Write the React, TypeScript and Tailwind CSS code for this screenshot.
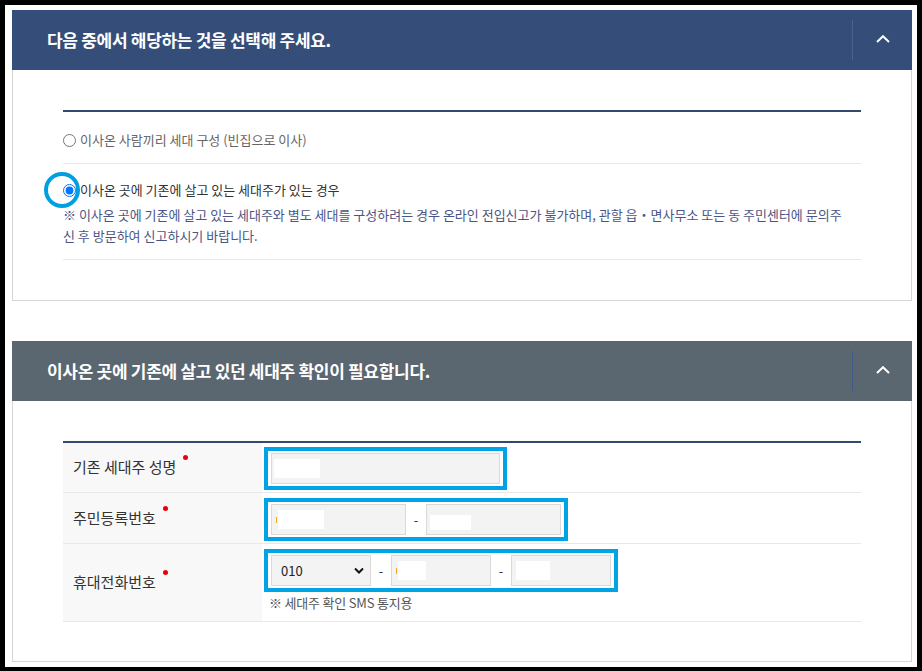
import type React from 'react';

const font = { fontFamily: "'Noto Sans CJK KR', 'Noto Sans', sans-serif" };

const Chevron: React.FC = () => (
  <svg width="14" height="8" viewBox="0 0 14 8" fill="none">
    <path d="M1 7L7 1.2L13 7" stroke="#ffffff" strokeWidth="2" />
  </svg>
);

const PanelHeader: React.FC<{ title: string; bg: string; divider: string }> = ({ title, bg, divider }) => (
  <div className={`flex h-[60px] items-center ${bg}`}>
    <h2 className="flex-1 pl-[35px] text-[17px] font-bold tracking-[-0.3px] text-white">{title}</h2>
    <div className={`h-[40px] w-px ${divider}`} />
    <div className="flex w-[59px] items-center justify-center pb-[2px]">
      <Chevron />
    </div>
  </div>
);

const RequiredDot: React.FC = () => (
  <span className="relative -top-[10px] ml-[7px] inline-block h-[5px] w-[5px] rounded-full bg-[#e8000b]" />
);

// grey input box with a white blot over the typed value
const FakeInput: React.FC<{ w: string; blot: string; blotH?: string; blotMt?: string; ml: string; sliver?: boolean }> = ({
  w,
  blot,
  blotH = 'h-[19px]',
  blotMt = '',
  ml,
  sliver,
}) => (
  <div className={`flex h-[31px] items-center border border-[#d9d9d9] bg-[#f3f3f3] ${w}`}>
    {sliver && <span className="ml-[4px] h-[6px] w-[1px] bg-[#f5a623]" />}
    <span className={`${ml} ${blot} ${blotH} ${blotMt} bg-white`} />
  </div>
);

const Dash: React.FC = () => <span className="w-[20px] text-center text-[13px] text-[#333]">-</span>;

const Annot: React.FC<{ children: React.ReactNode }> = ({ children }) => (
  <div className="ml-[2px] inline-flex items-center border-4 border-[#00a3e4] px-[3px] py-[2px]">{children}</div>
);

export default function App() {
  return (
    <div className="min-h-screen bg-black p-[5px]" style={font}>
      <div className="h-[662px] bg-white pl-[7px] pr-[5px] pt-[5px]">
        {/* choice panel */}
        <section>
          <PanelHeader title="다음 중에서 해당하는 것을 선택해 주세요." bg="bg-[#354e79]" divider="bg-[#4d628a]" />
          <div className="border-x border-b border-[#d6d6d6] px-[50px] py-[40px]">
            <div className="border-t-2 border-[#34496f]">
              <label className="flex items-center border-b border-[#e8e8e8] pb-[14px] pt-[19px]">
                <input type="radio" name="case" className="m-0 h-[13px] w-[13px]" />
                <span className="ml-[4px] text-[13px] leading-[18px] text-[#666]">
                  이사온 사람끼리 세대 구성 (빈집으로 이사)
                </span>
              </label>
              <div className="border-b border-[#e8e8e8] pb-[13px] pt-[17px]">
                <label className="flex items-center">
                  <span className="relative flex h-[13px] w-[13px]">
                    <input type="radio" name="case" defaultChecked className="m-0 h-[13px] w-[13px]" />
                    <span className="absolute -left-[19px] -top-[12px] h-[36px] w-[36px] rounded-full border-4 border-[#009fe0]" />
                  </span>
                  <span className="ml-[4px] text-[13px] leading-[18px] text-[#333]">
                    이사온 곳에 기존에 살고 있는 세대주가 있는 경우
                  </span>
                </label>
                <p className="mt-[5px] whitespace-nowrap text-[13px] leading-[21px] text-[#4b5585]">
                  ※ 이사온 곳에 기존에 살고 있는 세대주와 별도 세대를 구성하려는 경우 온라인 전입신고가 불가하며, 관할 읍・면사무소 또는 동 주민센터에 문의주
                  <br />신 후 방문하여 신고하시기 바랍니다.
                </p>
              </div>
            </div>
          </div>
        </section>

        {/* householder check panel */}
        <section className="mt-[40px]">
          <PanelHeader title="이사온 곳에 기존에 살고 있던 세대주 확인이 필요합니다." bg="bg-[#5a6670]" divider="bg-[#41598a]" />
          <div className="border-x border-b border-[#d6d6d6] px-[50px] pb-[39px] pt-[40px]">
            <div className="border-t-2 border-[#34496f] text-[15px] text-[#333]">
              <div className="flex border-b border-[#e8e8e8]">
                <div className="flex w-[199px] items-center bg-[#f8f8f8] pl-[10px]">
                  기존 세대주 성명<RequiredDot />
                </div>
                <div className="pb-[2px] pt-[4px]">
                  <Annot>
                    <FakeInput w="w-[229px]" blot="w-[46px]" ml="ml-[2px]" />
                  </Annot>
                </div>
              </div>
              <div className="flex border-b border-[#e8e8e8]">
                <div className="flex w-[199px] items-center bg-[#f8f8f8] pl-[10px]">
                  주민등록번호<RequiredDot />
                </div>
                <div className="pb-[2px] pt-[5px]">
                  <Annot>
                    <FakeInput w="w-[135px]" blot="w-[46px]" ml="ml-[1px]" sliver />
                    <Dash />
                    <FakeInput w="w-[135px]" blot="w-[41px]" blotH="h-[15px]" blotMt="mt-[6px]" ml="ml-[3px]" />
                  </Annot>
                </div>
              </div>
              <div className="flex border-b border-[#e8e8e8]">
                <div className="flex w-[199px] items-center bg-[#f8f8f8] pl-[10px]">
                  휴대전화번호<RequiredDot />
                </div>
                <div className="pb-[10px] pt-[5px]">
                  <Annot>
                    <div className="flex h-[31px] w-[100px] items-center justify-between border border-[#d9d9d9] bg-[#f3f3f3] pl-[9px] pr-[6px] text-[13px] text-[#222]">
                      <span>010</span>
                      <svg width="10" height="7" viewBox="0 0 10 7" fill="none">
                        <path d="M1 1.5L5 5.5L9 1.5" stroke="#111" strokeWidth="2" />
                      </svg>
                    </div>
                    <Dash />
                    <FakeInput w="w-[100px]" blot="w-[28px]" ml="ml-[1px]" sliver />
                    <Dash />
                    <FakeInput w="w-[100px]" blot="w-[34px]" ml="ml-[4px]" />
                  </Annot>
                  <p className="ml-[7px] mt-[3px] text-[13px] leading-[16px] tracking-[-0.2px] text-[#555]">
                    ※ 세대주 확인 SMS 통지용
                  </p>
                </div>
              </div>
            </div>
          </div>
        </section>
      </div>
    </div>
  );
}
